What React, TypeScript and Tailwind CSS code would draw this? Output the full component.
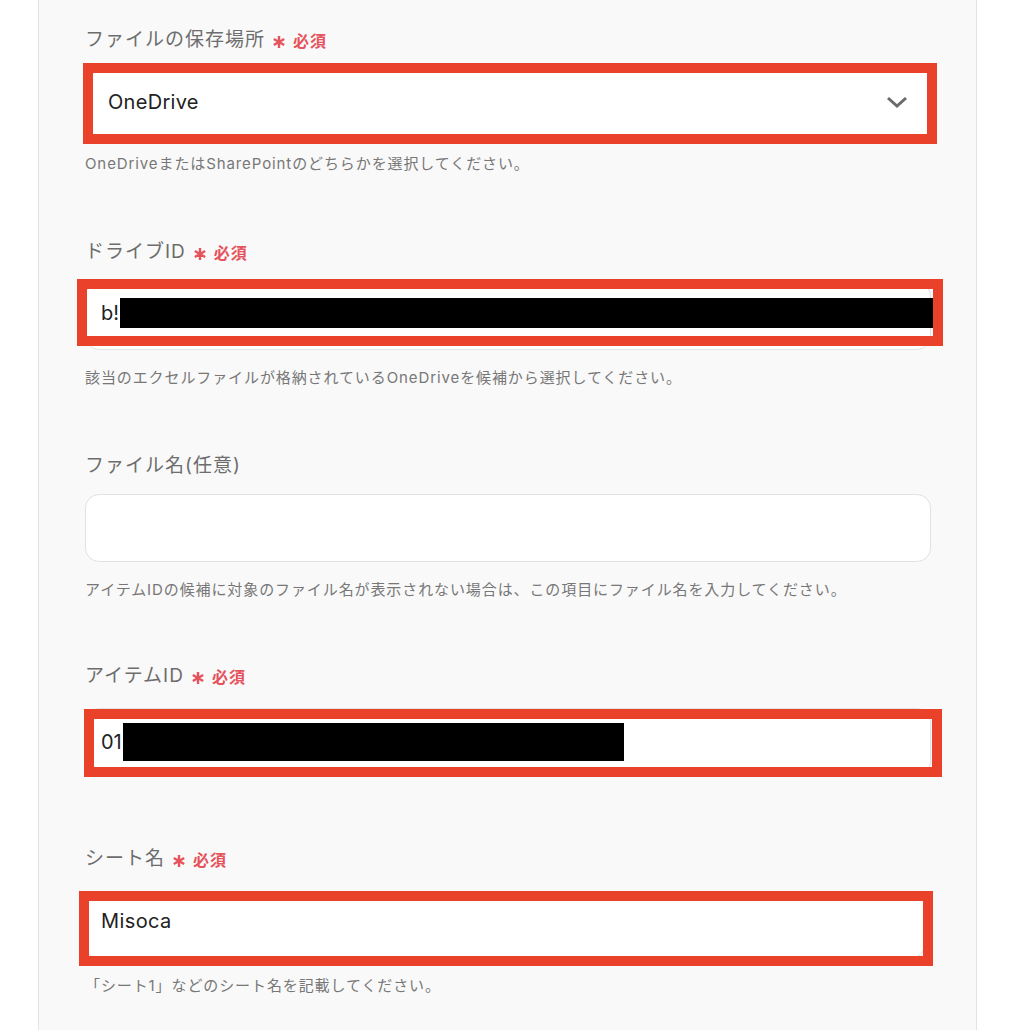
import React from 'react';

const FONT = { fontFamily: '"Inter", "Noto Sans CJK JP", sans-serif' };

function Required() {
  return (
    <span className="ml-[7px] inline-flex items-center text-[#e5535d]">
      <svg className="mt-[4px]" width="14" height="14" viewBox="0 0 14 14" fill="none">
        <path d="M7 1 V13 M1.8 4 L12.2 10 M1.8 10 L12.2 4" stroke="#e5535d" strokeWidth="2.4" />
      </svg>
      <span className="ml-[7px] mt-[2px] text-[16px] font-bold tracking-[1px]">必須</span>
    </span>
  );
}

function Label({ text, required, className }: { text: string; required?: boolean; className?: string }) {
  return (
    <div className={`flex h-[28px] items-center text-[19px] tracking-[1px] text-[#6d6d6d] ${className ?? ''}`}>
      <span>{text}</span>
      {required && <Required />}
    </div>
  );
}

function Help({ children, className }: { children: React.ReactNode; className?: string }) {
  return <p className={`h-[20px] text-[15px] leading-[20px] tracking-[0.9px] text-[#777777] ${className ?? ''}`}>{children}</p>;
}

// red annotation frame drawn over the field
function Outline({ className }: { className: string }) {
  return <div className={`pointer-events-none absolute border-[10px] border-[#e9412a] ${className}`} />;
}

export default function App() {
  return (
    <div className="min-h-screen bg-white" style={FONT}>
      <div className="ml-[38px] min-h-[1030px] w-[939px] border-x border-[#e4e4e4] bg-[#f9f9f9] pl-[46px] pr-[45px] pt-[26px]">
        {/* ファイルの保存場所 */}
        <Label text="ファイルの保存場所" required />
        <div className="relative mt-[14px] flex h-[68px] items-center rounded-[14px] bg-white px-[23px]">
          <span className="text-[20px] tracking-[0.3px] text-[#222]">OneDrive</span>
          <svg className="ml-auto" width="22" height="14" viewBox="0 0 22 14" fill="none">
            <path d="M2 3 L11 11 L20 3" stroke="#6a6a6a" strokeWidth="3" />
          </svg>
          <Outline className="-left-[2px] -right-[6px] -top-[5px] -bottom-[8px]" />
        </div>
        <Help className="mt-[18px]">OneDriveまたはSharePointのどちらかを選択してください。</Help>

        {/* ドライブID */}
        <Label text="ドライブID" required className="mt-[64px]" />
        <div className="relative mt-[16px] flex h-[68px] items-start rounded-[14px] border border-[#e1e1e6] bg-white pl-[15px] pt-[15px]">
          <span className="text-[20px] leading-[30px] text-[#222]">b!</span>
          <div className="-mr-[4px] ml-[1px] h-[30px] flex-1 bg-black" />
          <Outline className="-left-[9px] -right-[13px] -top-[4px] bottom-[3px]" />
        </div>
        <Help className="mt-[18px]">該当のエクセルファイルが格納されているOneDriveを候補から選択してください。</Help>

        {/* ファイル名 */}
        <Label text="ファイル名(任意)" className="mt-[64px]" />
        <div className="mt-[14px] h-[68px] rounded-[14px] border border-[#e1e1e6] bg-white" />
        <Help className="mt-[18px]">アイテムIDの候補に対象のファイル名が表示されない場合は、この項目にファイル名を入力してください。</Help>

        {/* アイテムID */}
        <Label text="アイテムID" required className="mt-[62px]" />
        <div className="relative mt-[18px] flex h-[68px] items-center rounded-[14px] border border-[#e1e1e6] bg-white pl-[15px]">
          <span className="text-[20px] text-[#222]">01</span>
          <div className="ml-[1px] h-[38px] w-[501px] bg-black" />
          <Outline className="-left-[2px] -right-[12px] top-0 -bottom-[2px]" />
        </div>

        {/* シート名 */}
        <Label text="シート名" required className="mt-[69px]" />
        <div className="relative mt-[20px] h-[66px] w-[840px] rounded-[14px] border border-[#e1e1e6] bg-white pl-[15px] pt-[13px]">
          <span className="text-[20px] leading-[28px] tracking-[0.4px] text-[#222]">Misoca</span>
          <Outline className="-left-[7px] -right-[9px] -top-[3px] -bottom-[8px]" />
        </div>
        <Help className="mt-[17px]">「シート1」などのシート名を記載してください。</Help>
      </div>
    </div>
  );
}
